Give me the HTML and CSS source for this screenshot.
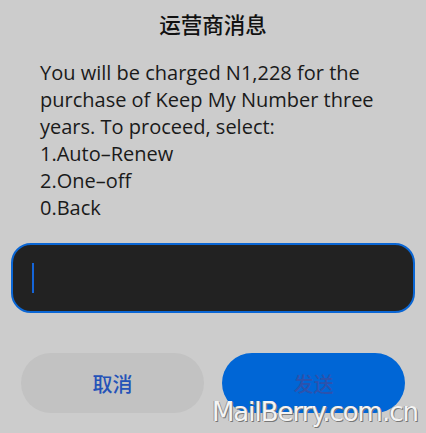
FILE: index.html
```html
<!DOCTYPE html>
<html lang="zh">
<head>
  <meta charset="UTF-8">
  <meta name="viewport" content="width=device-width, initial-scale=1.0">
  <title>运营商消息</title>
  <link rel="stylesheet" href="styles.css">
</head>
<body>

<div class="dialog">
  <h1 class="title">运营商消息</h1>

  <div class="message">
    You will be charged N1,228 for the purchase of Keep My Number three years. To proceed, select:<br>
    1.Auto–Renew<br>
    2.One–off<br>
    0.Back
  </div>

  <div class="reply">
    <span class="cursor"></span>
  </div>

  <div class="actions">
    <button class="btn cancel">取消</button>
    <button class="btn send">发送</button>
  </div>
</div>

<div class="watermark">MailBerry.com.cn</div>

</body>
</html>
```

FILE: styles.css
```css
html, body {
  margin: 0;
  height: 100%;
}

body {
  background-color: #cccccc;
  font-family: "Open Sans", "Noto Sans CJK SC", sans-serif;
  position: relative;
  overflow: hidden;
}

.dialog {
  padding: 0 11px;
}

.title {
  margin: 0;
  padding-top: 10px;
  height: 36px;
  text-align: center;
  font-family: "Noto Sans CJK SC", sans-serif;
  font-size: 21.5px;
  font-weight: 500;
  line-height: 28px;
  color: #111;
}

.message {
  padding: 13px 29px 0;
  height: 184px;
  font-size: 20px;
  line-height: 27px;
  color: #1a1a1a;
}

.reply {
  box-sizing: border-box;
  height: 70px;
  background-color: #222222;
  border: 2px solid #0a66d4;
  border-radius: 20px;
  display: flex;
  align-items: center;
  padding-left: 19px;
}

.cursor {
  width: 2px;
  height: 30px;
  background-color: #1565d8;
}

.actions {
  display: flex;
  gap: 18px;
  padding: 40px 10px 0;
}

.btn {
  flex: 1;
  height: 60px;
  border: none;
  border-radius: 30px;
  font-family: "Noto Sans CJK SC", sans-serif;
  font-size: 20px;
  font-weight: 500;
}

.cancel {
  background-color: #c2c2c2;
  color: #2452b8;
}

.send {
  background-color: #0066d6;
  color: #2c52ad;
}

.watermark {
  position: absolute;
  right: 8px;
  bottom: 6px;
  font-family: "DejaVu Sans", sans-serif;
  font-size: 26px;
  color: #f4f4f4;
  text-shadow: 1px 1px 0 #777, -1px 0 0 #999;
  letter-spacing: -1px;
}
```
